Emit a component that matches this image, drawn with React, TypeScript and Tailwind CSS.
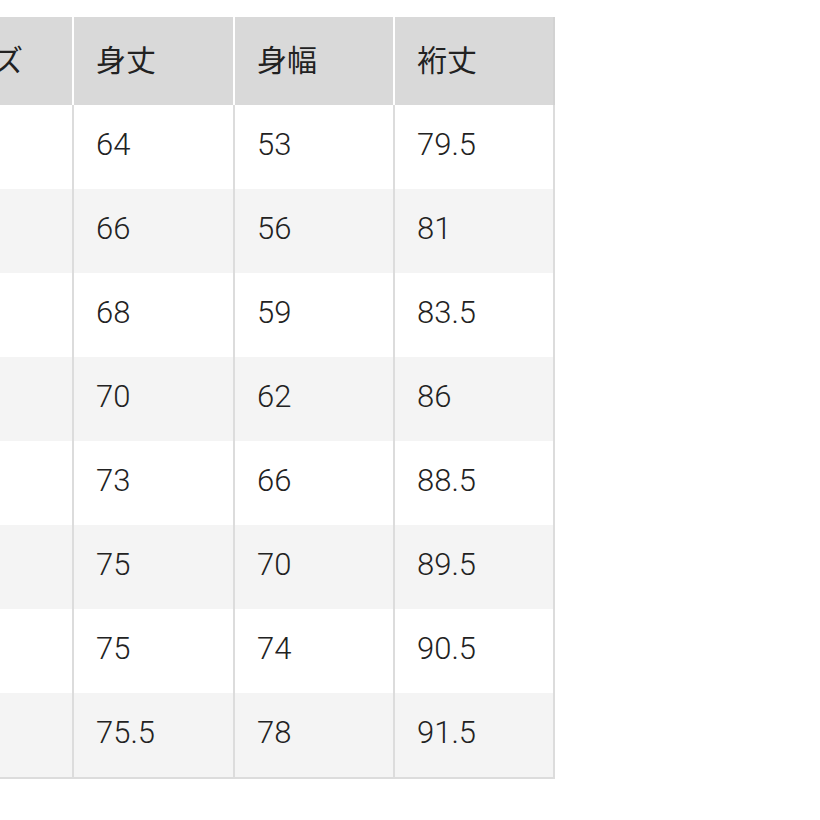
import React from "react";

const rows = [
  ["XS", "64", "53", "79.5"],
  ["S", "66", "56", "81"],
  ["M", "68", "59", "83.5"],
  ["L", "70", "62", "86"],
  ["XL", "73", "66", "88.5"],
  ["XXL", "75", "70", "89.5"],
  ["3XL", "75", "74", "90.5"],
  ["4XL", "75.5", "78", "91.5"],
];

const headers = ["サイズ", "身丈", "身幅", "裄丈"];

export default function App() {
  return (
    <div
      className="w-[820px] h-[820px] bg-white overflow-hidden text-[#222]"
      style={{ fontFamily: "Roboto, 'Noto Sans CJK JP', sans-serif" }}
    >
      <div className="mt-[17px] ml-[-88px] w-[643px] border-b-2 border-[#dcdcdc]">
        <div className="grid grid-cols-[162px_161px_160px_160px] h-[88px] bg-[#d9d9d9]">
          {headers.map((h, i) => (
            <div
              key={h}
              className={`flex items-center pl-[22px] text-[30px] leading-none border-r-2 ${
                i === 3 ? "border-[#d2d2d2]" : "border-white"
              }`}
            >
              {h}
            </div>
          ))}
        </div>
        {rows.map((r, ri) => (
          <div
            key={ri}
            className={`grid grid-cols-[162px_161px_160px_160px] h-[84px] ${
              ri % 2 === 1 ? "bg-[#f4f4f4]" : "bg-white"
            }`}
          >
            {r.map((c, ci) => (
              <div
                key={ci}
                className="flex items-center pl-[22px] pb-[5px] text-[31px] font-light leading-none border-r-2 border-[#dcdcdc]"
              >
                {c}
              </div>
            ))}
          </div>
        ))}
      </div>
    </div>
  );
}
